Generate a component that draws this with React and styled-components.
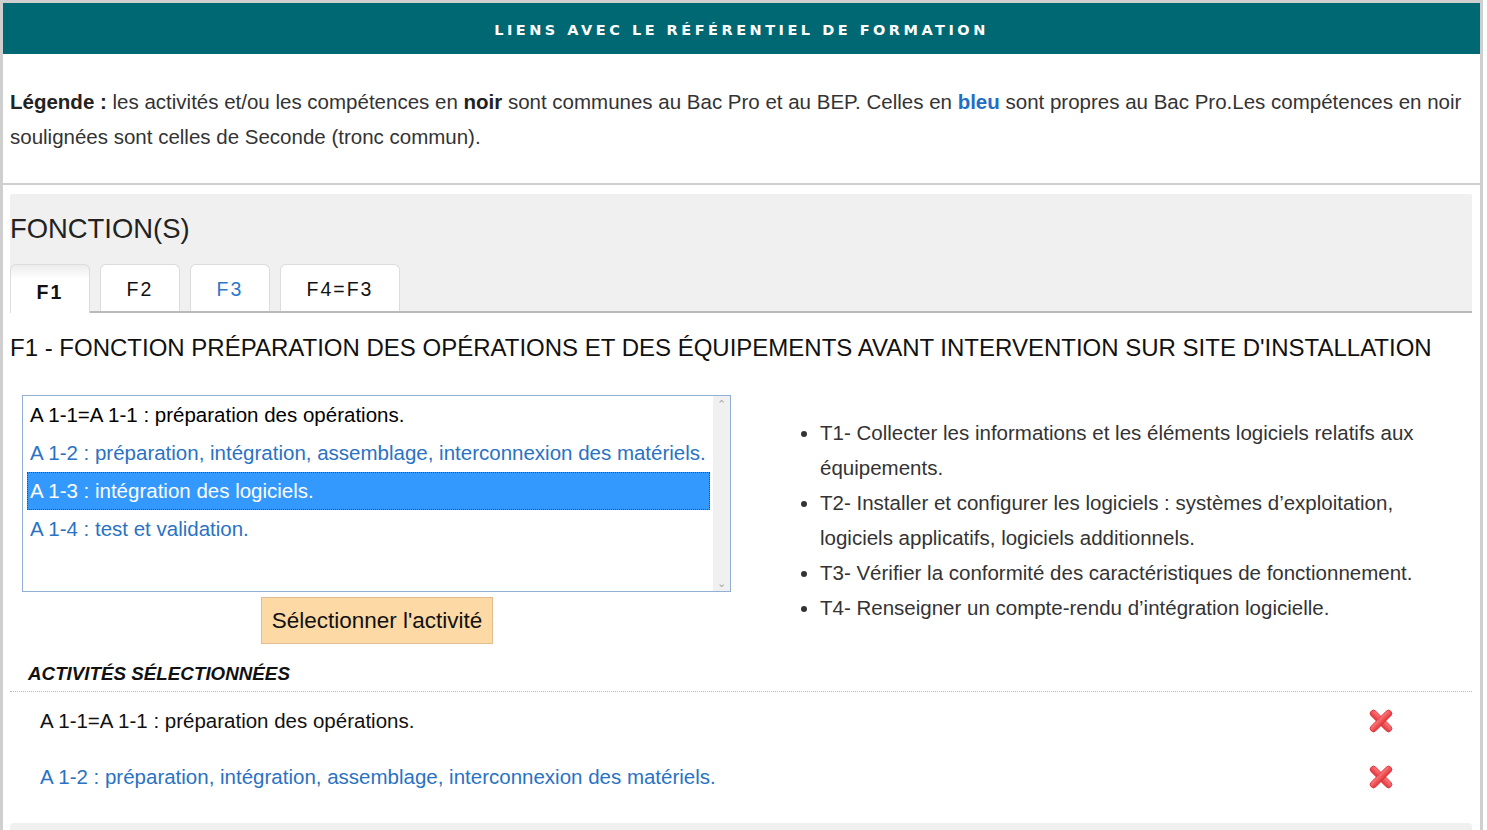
import React from "react";
import styled, { createGlobalStyle } from "styled-components";

const activities = [
  { id: 1, label: "A 1-1=A 1-1 : préparation des opérations.", blue: false },
  { id: 2, label: "A 1-2 : préparation, intégration, assemblage, interconnexion des matériels.", blue: true },
  { id: 3, label: "A 1-3 : intégration des logiciels.", blue: true },
  { id: 4, label: "A 1-4 : test et validation.", blue: true },
];

const tasks = [
  "T1- Collecter les informations et les éléments logiciels relatifs aux équipements.",
  "T2- Installer et configurer les logiciels : systèmes d’exploitation, logiciels applicatifs, logiciels additionnels.",
  "T3- Vérifier la conformité des caractéristiques de fonctionnement.",
  "T4- Renseigner un compte-rendu d’intégration logicielle.",
];

const tabs = [
  { id: "F1", width: 80 },
  { id: "F2", width: 80 },
  { id: "F3", width: 80, blue: true },
  { id: "F4=F3", width: 120 },
];

function RemoveIcon() {
  return (
    <svg width="24" height="24" viewBox="0 0 26 26">
      <defs>
        <linearGradient id="xg" x1="0" y1="0" x2="0" y2="1">
          <stop offset="0" stopColor="#ff7b7b" />
          <stop offset="1" stopColor="#e0353d" />
        </linearGradient>
      </defs>
      <g stroke="#d8333a" strokeWidth="1" fill="url(#xg)">
        <rect x="-2" y="9.5" width="30" height="7" rx="3.5" transform="rotate(45 13 13)" />
        <rect x="-2" y="9.5" width="30" height="7" rx="3.5" transform="rotate(-45 13 13)" />
      </g>
    </svg>
  );
}

export default function App() {
  return (
    <>
      <GlobalStyle />
      <Page>
        <Header>LIENS AVEC LE RÉFÉRENTIEL DE FORMATION</Header>
        <Legend>
          <Strong>Légende :</Strong> les activités et/ou les compétences en <Strong>noir</Strong> sont
          communes au Bac Pro et au BEP. Celles en <Strong $blue>bleu</Strong> sont propres au Bac
          Pro.Les compétences en noir soulignées sont celles de Seconde (tronc commun).
        </Legend>
        <Main>
          <FunctionPanel>
            <PanelTitle>FONCTION(S)</PanelTitle>
            <TabBar>
              {tabs.map((t) => (
                <Tab key={t.id} $active={t.id === "F1"} $blue={t.blue} $width={t.width}>
                  {t.id}
                </Tab>
              ))}
            </TabBar>
          </FunctionPanel>
          <FunctionTitle>
            F1 - FONCTION PRÉPARATION DES OPÉRATIONS ET DES ÉQUIPEMENTS AVANT INTERVENTION SUR SITE
            D'INSTALLATION
          </FunctionTitle>
          <Columns>
            <LeftColumn>
              <ListBox>
                <Options>
                  {activities.map((a) => (
                    <Option key={a.id} $blue={a.blue} $selected={a.id === 3}>
                      {a.label}
                    </Option>
                  ))}
                </Options>
                <Scrollbar>
                  <Arrow>&#8963;</Arrow>
                  <Arrow>&#8964;</Arrow>
                </Scrollbar>
              </ListBox>
              <SelectButton>Sélectionner l'activité</SelectButton>
            </LeftColumn>
            <TaskList>
              {tasks.map((t) => (
                <li key={t}>{t}</li>
              ))}
            </TaskList>
          </Columns>
          <SelectedTitle>ACTIVITÉS SÉLECTIONNÉES</SelectedTitle>
          <SelectedList>
            {activities.slice(0, 2).map((a) => (
              <SelectedRow key={a.id} $blue={a.blue}>
                <span>{a.label}</span>
                <RemoveIcon />
              </SelectedRow>
            ))}
          </SelectedList>
          <NextPanel />
        </Main>
      </Page>
    </>
  );
}

const GlobalStyle = createGlobalStyle`
  body {
    margin: 0;
    background: #fff;
    font-family: "Liberation Sans", Arial, sans-serif;
    overflow: hidden;
  }
  * { box-sizing: border-box; }
`;

const Page = styled.div`
  width: 1483px;
  min-height: 830px;
  border: 3px solid #cfcfcf;
  border-bottom: none;
  background: #fff;
`;

const Header = styled.div`
  height: 51px;
  background: #006873;
  color: #fff;
  display: flex;
  align-items: center;
  justify-content: center;
  font-family: "DejaVu Sans", Verdana, sans-serif;
  font-weight: bold;
  font-size: 14.5px;
  letter-spacing: 3.5px;
  padding-top: 2px;
`;

const Legend = styled.div`
  padding: 30px 7px 29px;
  font-size: 20.5px;
  line-height: 35px;
  color: #333;
  border-bottom: 2px solid #cfcfcf;
`;

const Strong = styled.b`
  color: ${(p) => (p.$blue ? "#1f6fc5" : "#222")};
`;

const Main = styled.div`
  padding: 9px 8px 0 7px;
`;

const FunctionPanel = styled.div`
  background: #f0f0f0;
  padding-top: 17px;
  border-bottom: 2px solid #b9b9b9;
  border-radius: 2px 2px 0 0;
`;

const PanelTitle = styled.div`
  font-size: 27.4px;
  line-height: 36px;
  color: #222;
`;

const TabBar = styled.div`
  display: flex;
  gap: 10px;
  margin-top: 17px;
  margin-bottom: -2px;
`;

const Tab = styled.div`
  width: ${(p) => p.$width}px;
  height: ${(p) => (p.$active ? 49 : 47)}px;
  display: flex;
  align-items: center;
  justify-content: center;
  padding-top: ${(p) => (p.$active ? 6 : 2)}px;
  border: 1px solid #dcdcdc;
  border-bottom: none;
  border-radius: 6px 6px 0 0;
  background: ${(p) => (p.$active ? "linear-gradient(#ececec, #fff 30%)" : "#fff")};
  font-size: 19.5px;
  letter-spacing: 2px;
  font-weight: ${(p) => (p.$active ? "bold" : "normal")};
  color: ${(p) => (p.$blue ? "#2a78c8" : "#111")};
  align-self: flex-end;
  ${(p) => !p.$active && "margin-bottom: 2px;"}
`;

const FunctionTitle = styled.div`
  margin-top: 21px;
  font-size: 24px;
  line-height: 28px;
  color: #111;
  white-space: nowrap;
`;

const Columns = styled.div`
  display: flex;
  align-items: center;
  margin-top: 33px;
`;

const LeftColumn = styled.div`
  width: 734px;
  padding-left: 12px;
  display: flex;
  flex-direction: column;
  align-items: flex-start;
`;

const ListBox = styled.div`
  width: 709px;
  height: 197px;
  border: 1px solid #8fb0d4;
  display: flex;
  background: #fff;
`;

const Options = styled.div`
  flex: 1;
  padding: 0 3px 0 4px;
`;

const Option = styled.div`
  height: 38px;
  line-height: 38px;
  padding-left: 3px;
  font-size: 20.5px;
  white-space: nowrap;
  color: ${(p) => (p.$selected ? "#fff" : p.$blue ? "#2a72c3" : "#000")};
  background: ${(p) => (p.$selected ? "#3399ff" : "transparent")};
  outline: ${(p) => (p.$selected ? "1px dotted #1a4f9a" : "none")};
  outline-offset: -1px;
`;

const Scrollbar = styled.div`
  width: 17px;
  background: #f0f0f0;
  display: flex;
  flex-direction: column;
  justify-content: space-between;
  align-items: center;
  padding: 2px 0;
`;

const Arrow = styled.span`
  font-size: 11px;
  line-height: 12px;
  color: #a8a8a8;
`;

const SelectButton = styled.button`
  margin-top: 5px;
  margin-left: 239px;
  width: 232px;
  height: 47px;
  background: #fdd9a6;
  border: 1px solid #e3bd8f;
  font-family: "Liberation Sans", Arial, sans-serif;
  font-size: 22.5px;
  color: #111;
  padding: 0;
`;

const TaskList = styled.ul`
  flex: 1;
  margin: 0;
  padding: 0 30px 0 76px;
  font-size: 20.5px;
  line-height: 35px;
  color: #333;
`;

const SelectedTitle = styled.div`
  margin-top: 19px;
  padding: 0 0 6px 18px;
  font-size: 18.8px;
  line-height: 22px;
  font-weight: bold;
  font-style: italic;
  color: #111;
  border-bottom: 1px dotted #bdbdbd;
`;

const SelectedList = styled.div`
  padding: 0 79px 0 30px;
`;

const SelectedRow = styled.div`
  height: 56px;
  display: flex;
  align-items: center;
  justify-content: space-between;
  font-size: 20.5px;
  color: ${(p) => (p.$blue ? "#2a72c3" : "#111")};
  padding-top: 2px;
`;

const NextPanel = styled.div`
  margin-top: 19px;
  height: 40px;
  background: #f0f0f0;
  border-radius: 4px;
`;
